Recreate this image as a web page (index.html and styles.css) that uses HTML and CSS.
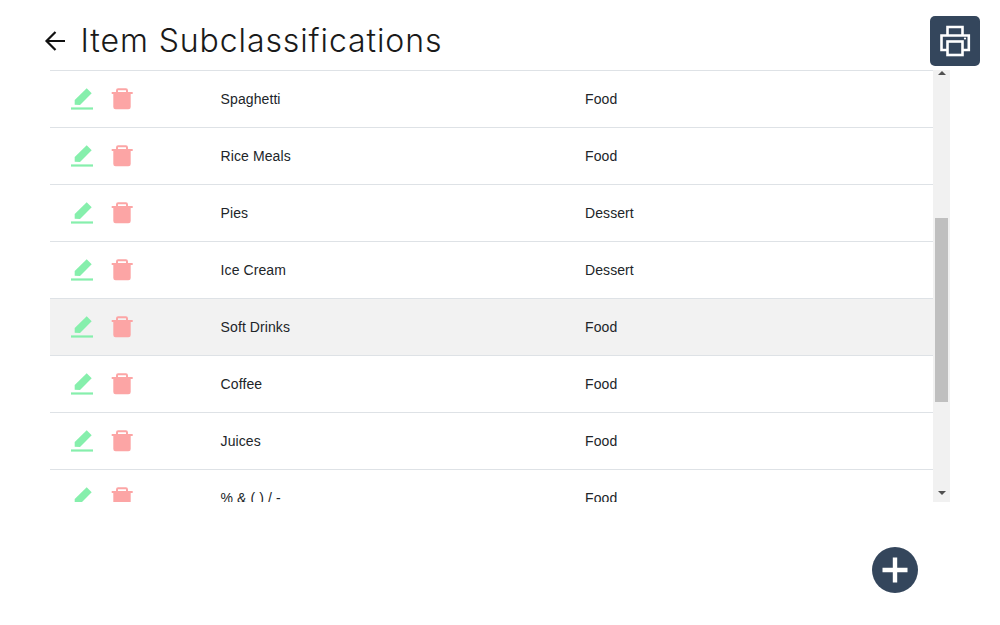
FILE: index.html
```html
<!DOCTYPE html>
<html lang="en">
<head>
<meta charset="utf-8">
<title>Item Subclassifications</title>
<link rel="stylesheet" href="styles.css">
</head>
<body>
<svg class="defs" width="0" height="0" aria-hidden="true">
  <symbol id="pencil" viewBox="0 0 24 24">
    <polygon points="4.7,17.7 4.7,13 16.7,1.3 21.7,6.3 10,18" fill="#86efac"/>
    <rect x="1" y="20.4" width="22" height="2.2" fill="#86efac"/>
  </symbol>
  <symbol id="trash" viewBox="0 0 24 24">
    <path d="M7 5V3.4Q7 2.3 8.1 2.3H15.9Q17 2.3 17 3.4V5" fill="none" stroke="#fca5a5" stroke-width="2"/>
    <rect x="1.7" y="5" width="21" height="2" fill="#fca5a5"/>
    <path d="M3.3 7H20.7V20Q20.7 22.3 18.4 22.3H5.6Q3.3 22.3 3.3 20Z" fill="#fca5a5"/>
  </symbol>
</svg>
<header class="page-header">
  <svg class="back" width="22" height="24" viewBox="0 0 22 24"><path d="M21 12H3.5M11.5 3L2.5 12L11.5 21" fill="none" stroke="#111" stroke-width="2.2"/></svg>
  <h1 class="title">Item Subclassifications</h1>
</header>
<main class="table-wrap">
  <div class="rows">
    <div class="row"><div class="actions"><svg class="icon"><use href="#pencil"/></svg><svg class="icon"><use href="#trash"/></svg></div><div class="name">Spaghetti</div><div class="cls">Food</div></div>
    <div class="row"><div class="actions"><svg class="icon"><use href="#pencil"/></svg><svg class="icon"><use href="#trash"/></svg></div><div class="name">Rice Meals</div><div class="cls">Food</div></div>
    <div class="row"><div class="actions"><svg class="icon"><use href="#pencil"/></svg><svg class="icon"><use href="#trash"/></svg></div><div class="name">Pies</div><div class="cls">Dessert</div></div>
    <div class="row"><div class="actions"><svg class="icon"><use href="#pencil"/></svg><svg class="icon"><use href="#trash"/></svg></div><div class="name">Ice Cream</div><div class="cls">Dessert</div></div>
    <div class="row row-hover"><div class="actions"><svg class="icon"><use href="#pencil"/></svg><svg class="icon"><use href="#trash"/></svg></div><div class="name">Soft Drinks</div><div class="cls">Food</div></div>
    <div class="row"><div class="actions"><svg class="icon"><use href="#pencil"/></svg><svg class="icon"><use href="#trash"/></svg></div><div class="name">Coffee</div><div class="cls">Food</div></div>
    <div class="row"><div class="actions"><svg class="icon"><use href="#pencil"/></svg><svg class="icon"><use href="#trash"/></svg></div><div class="name">Juices</div><div class="cls">Food</div></div>
    <div class="row"><div class="actions"><svg class="icon"><use href="#pencil"/></svg><svg class="icon"><use href="#trash"/></svg></div><div class="name">% &amp; ( ) / -</div><div class="cls">Food</div></div>
  </div>
  <div class="scrollbar">
    <span class="arrow-up"></span>
    <div class="track"><div class="thumb"></div></div>
    <span class="arrow-down"></span>
  </div>
</main>
<button class="print-btn" type="button" aria-label="Print">
  <svg width="50" height="50" viewBox="0 0 50 50" fill="none" stroke="#fff" stroke-width="2.6">
    <path d="M17.5 19V11H32.5V19"/>
    <path d="M17.5 34H11.5V19.5H38.8V34H32.5"/>
    <rect x="17.5" y="25.5" width="15" height="13.5"/>
    <circle cx="35" cy="22.5" r="1.1" fill="#fff" stroke="none"/>
  </svg>
</button>
<button class="fab" type="button" aria-label="Add">
  <svg width="46" height="46" viewBox="0 0 46 46"><path d="M23 10.5V35.5M10.5 23H35.5" stroke="#fff" stroke-width="4.4"/></svg>
</button>
</body>
</html>
```
FILE: styles.css
```css
html, body {
  margin: 0;
  padding: 0;
  height: 100%;
  background: #fff;
  overflow: hidden;
}
body {
  position: relative;
  font-family: "Liberation Sans", Arial, sans-serif;
  font-size: 14px;
  letter-spacing: 0.09px;
  color: #212529;
}
.defs {
  position: absolute;
}
.page-header {
  display: flex;
  align-items: center;
  height: 70px;
  padding: 11px 0 0 44px;
  box-sizing: border-box;
}
.back {
  flex: none;
  margin-right: 14.5px;
}
.title {
  margin: 0;
  font-family: Inter, "Open Sans", sans-serif;
  font-weight: 300;
  font-size: 32px;
  letter-spacing: 0.9px;
  color: #1a1a1a;
  white-space: nowrap;
}
.table-wrap {
  display: flex;
  width: 900px;
  height: 432px;
  margin-left: 50px;
}
.rows {
  flex: 1;
  min-width: 0;
  overflow: hidden;
  border-top: 1px solid #dee2e6;
}
.row {
  display: flex;
  align-items: center;
  height: 56px;
  border-bottom: 1px solid #dee2e6;
}
.row-hover {
  background: #f2f2f2;
}
.actions {
  display: flex;
  gap: 16px;
  width: 170.6px;
  padding-left: 20px;
  box-sizing: border-box;
  flex: none;
}
.icon {
  width: 24px;
  height: 24px;
  flex: none;
}
.name {
  width: 364.4px;
  flex: none;
}
.scrollbar {
  display: flex;
  flex-direction: column;
  align-items: center;
  flex: none;
  width: 17px;
  background: #f1f1f1;
}
.arrow-up, .arrow-down {
  flex: none;
  width: 0;
  height: 0;
  border-left: 4px solid transparent;
  border-right: 4px solid transparent;
}
.arrow-up {
  margin-top: 1px;
  border-bottom: 4px solid #505050;
}
.arrow-down {
  margin-bottom: 7px;
  border-top: 4px solid #505050;
}
.track {
  flex: 1;
  width: 13px;
  padding-top: 143px;
  box-sizing: border-box;
}
.thumb {
  height: 184px;
  background: #bfbfbf;
}
.print-btn {
  position: absolute;
  left: 930px;
  top: 16px;
  width: 50px;
  height: 50px;
  padding: 0;
  border: 0;
  border-radius: 5px;
  background: #34465c;
}
.fab {
  position: absolute;
  left: 872px;
  top: 547px;
  width: 46px;
  height: 46px;
  padding: 0;
  border: 0;
  border-radius: 50%;
  background: #34465c;
}
.print-btn svg, .fab svg {
  display: block;
}
```
